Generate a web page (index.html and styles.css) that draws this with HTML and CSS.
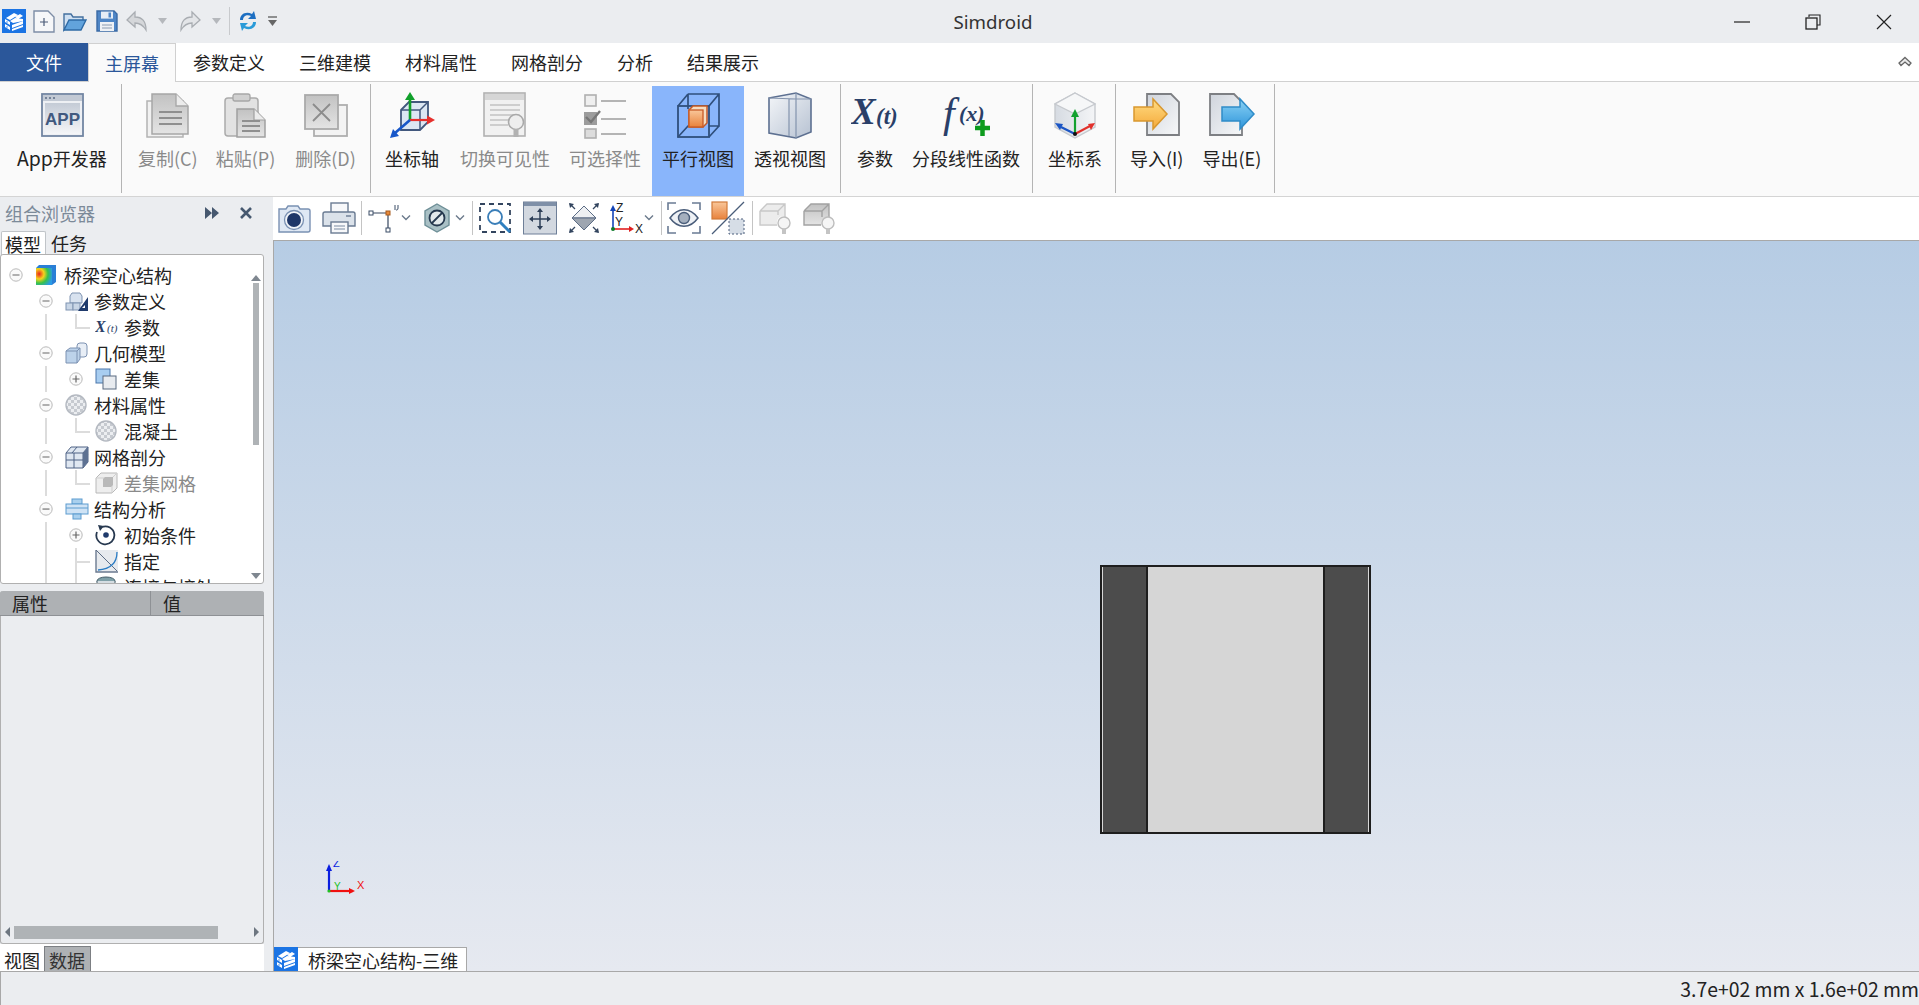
FILE: index.html
```html
<!DOCTYPE html>
<html lang="zh-CN">
<head>
<meta charset="utf-8">
<title>Simdroid</title>
<link rel="stylesheet" href="styles.css">
</head>
<body>
<svg class="defs" aria-hidden="true">
  <defs>
    <linearGradient id="gPanel" x1="0" y1="0" x2="0" y2="1"><stop offset="0" stop-color="#c4cbd6"/><stop offset="1" stop-color="#f5f6f8"/></linearGradient>
    <linearGradient id="gDoc" x1="0" y1="0" x2="1" y2="1"><stop offset="0" stop-color="#cfd4dc"/><stop offset="1" stop-color="#f7f8f9"/></linearGradient>
    <linearGradient id="gGrey" x1="0" y1="0" x2="0" y2="1"><stop offset="0" stop-color="#c2c2c2"/><stop offset="1" stop-color="#e4e4e4"/></linearGradient>
    <linearGradient id="gOrange" x1="0" y1="0" x2="0" y2="1"><stop offset="0" stop-color="#f9c79a"/><stop offset="1" stop-color="#e8823c"/></linearGradient>
    <linearGradient id="gYellow" x1="0" y1="0" x2="0" y2="1"><stop offset="0" stop-color="#ffdd84"/><stop offset="1" stop-color="#f5a93a"/></linearGradient>
    <linearGradient id="gBlue" x1="0" y1="0" x2="0" y2="1"><stop offset="0" stop-color="#8ad2f5"/><stop offset="1" stop-color="#2f95da"/></linearGradient>
    <linearGradient id="gCube" x1="0" y1="0" x2="1" y2="0"><stop offset="0" stop-color="#d6dbe2"/><stop offset="1" stop-color="#f4f5f7"/></linearGradient>
    <linearGradient id="gBox" x1="0" y1="0" x2="1" y2="1"><stop offset="0" stop-color="#f4f6f9"/><stop offset="1" stop-color="#b7c2d2"/></linearGradient>
    <radialGradient id="gHeat" cx="0.2" cy="0.35" r="1"><stop offset="0" stop-color="#e8261f"/><stop offset="0.3" stop-color="#f7d21c"/><stop offset="0.55" stop-color="#38c24a"/><stop offset="0.85" stop-color="#2a9be8"/></radialGradient>
    <pattern id="pCheck" width="6" height="6" patternUnits="userSpaceOnUse"><rect width="6" height="6" fill="#eceef1"/><rect width="3" height="3" fill="#c6cad0"/><rect x="3" y="3" width="3" height="3" fill="#c6cad0"/></pattern>
    <symbol id="logo" viewBox="0 0 24 24">
      <rect width="24" height="24" fill="#1b74e4"/>
      <path d="M4 9 12 4l4 2-8 5zM13 8l5-3 3 2-5 3zM8 12l5-3 8 1v2l-10 2z" fill="#fff"/>
      <path d="M3 10l5 3v3l-5-3zM3 15l5 3v3l-5-3zM10 16l11-4v3l-11 4zM10 20l11-4v2l-11 4z" fill="#fff"/>
      <path d="M5 12.5v1M5 17.5v1" stroke="#1b74e4" stroke-width="1.5"/>
    </symbol>
    <symbol id="sphere" viewBox="0 0 22 22">
      <circle cx="11" cy="11" r="10" fill="url(#pCheck)" stroke="#b4b9c1" stroke-width="1.4"/>
    </symbol>
    <symbol id="cubeA" viewBox="0 0 34 34">
      <path d="M2 10 9 3h18v12h-2a6 6 0 0 0-6 6v2H2z" fill="#ececec"/>
      <path d="M2 10 9 3h18v13M2 10v14h17M2 10h18v4M20 10l7-7" fill="none" stroke="#c8c8c8" stroke-width="1.400"/>
      <circle cx="26" cy="22" r="6" fill="#f5f5f5" stroke="#bdbdbd" stroke-width="1.400"/>
      <rect x="24" y="28" width="4" height="5" fill="#c4c4c4"/>
    </symbol>
    <symbol id="cubeB" viewBox="0 0 34 34">
      <path d="M2 10 9 3h18v13l-6 2v6H2z" fill="url(#gGrey)"/>
      <path d="M2 10 9 3h18v13M2 10v14h17M2 10h18v6M20 10l7-7" fill="none" stroke="#a2a2a2" stroke-width="1.400"/>
      <circle cx="26" cy="22" r="6" fill="#f5f5f5" stroke="#bdbdbd" stroke-width="1.400"/>
      <rect x="24" y="28" width="4" height="5" fill="#c4c4c4"/>
    </symbol>
    <symbol id="chev" viewBox="0 0 10 8"><path d="M1 1.500 5 5.500 9 1.500" fill="none" stroke="#6b7a8c" stroke-width="1.400"/></symbol>
    <symbol id="minus" viewBox="0 0 14 14"><circle cx="7" cy="7" r="6.200" fill="#fafafa" stroke="#b9b9b9"/><path d="M3.500 7h7" stroke="#666" stroke-width="1.200"/></symbol>
    <symbol id="plus" viewBox="0 0 14 14"><circle cx="7" cy="7" r="6.200" fill="#fafafa" stroke="#b9b9b9"/><path d="M3.500 7h7M7 3.500v7" stroke="#666" stroke-width="1.200"/></symbol>
  </defs>
</svg>

<div class="app">
  <header class="titlebar">
    <div class="quick">
      <svg class="q-logo" width="24" height="24"><use href="#logo"/></svg>
      <svg class="q-new" width="22" height="24" viewBox="0 0 22 24"><path d="M1 2h14l6 6v15H1z" fill="#f6f7f9" stroke="#7d8da6" stroke-width="1.400"/><path d="M7 13h8M11 9v8" stroke="#4a5b78" stroke-width="1.200"/></svg>
      <svg class="q-open" width="24" height="24" viewBox="0 0 24 24"><path d="M1 21V5h7l2 3h10v4H7z" fill="#cfe0f2" stroke="#44709f" stroke-width="1.400"/><path d="M1 21 6 11h17l-5 10z" fill="#62a3dc" stroke="#2f6ba5" stroke-width="1.400"/></svg>
      <svg class="q-save" width="22" height="24" viewBox="0 0 22 24"><path d="M1 2h17l3 3v17H1z" fill="#4f86c6" stroke="#3a6aa5" stroke-width="1.400"/><rect x="5" y="2.600" width="12" height="7" fill="#e6edf6"/><rect x="12.500" y="3.500" width="2.500" height="5" fill="#4f86c6"/><rect x="4" y="13" width="14" height="9" fill="#eef1f5"/><path d="M6 16h10M6 19h10" stroke="#8a9ab0"/></svg>
      <svg class="q-undo" width="22" height="22" viewBox="0 0 22 22"><path d="M9 2 1 10l8 7v-4c5 0 8 2 11 7 0-9-4-13-11-13z" fill="#d5d7da" stroke="#a9adb2" stroke-width="1.300"/></svg>
      <svg class="q-c1" width="9" height="6" viewBox="0 0 9 6"><path d="M0 0h9L4.500 6z" fill="#b5b8bc"/></svg>
      <svg class="q-redo" width="22" height="22" viewBox="0 0 22 22"><path d="M13 2l8 8-8 7v-4c-5 0-8 2-11 7 0-9 4-13 11-13z" fill="#e3e5e8" stroke="#a9adb2" stroke-width="1.300"/></svg>
      <svg class="q-c2" width="9" height="6" viewBox="0 0 9 6"><path d="M0 0h9L4.500 6z" fill="#b5b8bc"/></svg>
      <span class="q-sep"></span>
      <svg class="q-sync" width="20" height="24" viewBox="0 0 20 24"><path d="M2 11C2 5 8 2 14 5l2-3 2 8-8 0 3-3C9 5 5 7 5 11z" fill="#1d6fc2"/><path d="M18 13c0 6-6 9-12 6l-2 3-2-8 8 0-3 3c4 2 8 0 8-4z" fill="#2a9bd8"/></svg>
      <svg class="q-more" width="9" height="10" viewBox="0 0 9 10"><path d="M0 1h9" stroke="#666" stroke-width="1.400"/><path d="M0 4h9L4.500 10z" fill="#666"/></svg>
    </div>
    <div class="app-title">Simdroid</div>
    <div class="winctl">
      <span class="win-btn"><svg width="16" height="16" viewBox="0 0 16 16"><path d="M0 8h16" stroke="#222" stroke-width="1.200"/></svg></span>
      <span class="win-btn"><svg width="16" height="16" viewBox="0 0 16 16"><path d="M4 3V1h11v10h-3" fill="none" stroke="#222" stroke-width="1.100"/><rect x="1" y="4" width="11" height="11" fill="none" stroke="#222" stroke-width="1.300"/></svg></span>
      <span class="win-btn"><svg width="16" height="16" viewBox="0 0 16 16"><path d="M1 1l14 14M15 1 1 15" stroke="#222" stroke-width="1.200"/></svg></span>
    </div>
  </header>

  <nav class="tabs">
    <span class="tab tab-file">文件</span>
    <span class="tab tab-active">主屏幕</span>
    <span class="tab">参数定义</span>
    <span class="tab">三维建模</span>
    <span class="tab">材料属性</span>
    <span class="tab">网格剖分</span>
    <span class="tab">分析</span>
    <span class="tab">结果展示</span>
    <svg class="collapse" width="14" height="11" viewBox="0 0 14 11"><path d="M7 1.500 13 7l-2 2.500-4-3.500-4 3.500L1 7z" fill="#e9e9e9" stroke="#666" stroke-width="1.300"/></svg>
  </nav>

  <section class="ribbon">
    <div class="group g1">
      <div class="rb">
        <svg width="44" height="46" viewBox="0 0 44 46"><rect x="2" y="2" width="41" height="42" fill="#eef0f4" stroke="#7285a2" stroke-width="1.800"/><rect x="3" y="3" width="39" height="6" fill="#c2c9d4"/><path d="M5 6h2M9 6h2M13 6h2" stroke="#5c6c85" stroke-width="1.400"/><rect x="5" y="11" width="35" height="31" fill="url(#gPanel)"/><text class="svg-app" x="22.500" y="33" text-anchor="middle">APP</text></svg>
        <span><span class="lat">App</span>开发器</span>
      </div>
    </div>
    <div class="group g2">
      <div class="rb off">
        <svg width="46" height="46" viewBox="0 0 46 46"><rect x="2" y="9" width="36" height="36" fill="#f1f1f1" stroke="#b3b3b3" stroke-width="1.500"/><path d="M7 2h24l12 12v28H7z" fill="url(#gGrey)" stroke="#a6a6a6" stroke-width="1.500"/><path d="M31 2v12h12" fill="#ececec" stroke="#a6a6a6" stroke-width="1.300"/><path d="M14 20h23M14 26h23M14 32h23" stroke="#8f8f8f" stroke-width="2"/></svg>
        <span>复制(C)</span>
      </div>
      <div class="rb off s-2">
        <svg width="46" height="46" viewBox="0 0 46 46"><rect x="3" y="6" width="33" height="38" rx="3" fill="#e2e2e2" stroke="#ababab" stroke-width="1.500"/><rect x="11" y="2" width="17" height="7" rx="2" fill="#d0d0d0" stroke="#a6a6a6" stroke-width="1.300"/><path d="M15 17h17l11 11v17H15z" fill="url(#gGrey)" stroke="#a0a0a0" stroke-width="1.500"/><path d="M32 17v11h11" fill="#ececec" stroke="#a0a0a0" stroke-width="1.200"/><path d="M20 29h18M20 34h18M20 39h18" stroke="#8f8f8f" stroke-width="1.800"/></svg>
        <span>粘贴(P)</span>
      </div>
      <div class="rb off">
        <svg width="46" height="46" viewBox="0 0 46 46"><rect x="11" y="13" width="33" height="31" fill="#f3f3f3" stroke="#aeaeae" stroke-width="1.800"/><rect x="2" y="3" width="33" height="34" fill="url(#gGrey)" stroke="#aaaaaa" stroke-width="1.800"/><path d="M10 12l17 17M27 12 10 29" stroke="#8c8c8c" stroke-width="1.800"/></svg>
        <span>删除(D)</span>
      </div>
    </div>
    <div class="group g3">
      <div class="rb">
        <svg width="46" height="48" viewBox="0 0 46 48"><path d="M12 19l8-8h19v20l-8 8H12z" fill="#dce7f3" stroke="#42587d" stroke-width="1.800"/><path d="M12 19h19v20M31 19l8-8" fill="none" stroke="#42587d" stroke-width="1.500"/><path d="M21 29V8" stroke="#10a02a" stroke-width="2.600"/><path d="M21 1l5 8H16z" fill="#10a02a"/><path d="M21 29h18" stroke="#e6302c" stroke-width="2.200"/><path d="M46 29l-8 4.500v-9z" fill="#e6302c"/><path d="M21 29 6 42" stroke="#1757c9" stroke-width="2.600"/><path d="M1 47l3-9 6 7z" fill="#1757c9"/></svg>
        <span>坐标轴</span>
      </div>
      <div class="rb off s1">
        <svg width="46" height="48" viewBox="0 0 46 48"><rect x="2" y="2" width="41" height="43" fill="#f1f1f1" stroke="#b1b1b1" stroke-width="1.600"/><rect x="3" y="3" width="39" height="6" fill="#d6d6d6"/><path d="M8 14h30M8 19h30M8 24h24M8 29h20M8 34h18" stroke="#c2c2c2" stroke-width="1.600"/><circle cx="34" cy="31" r="7.500" fill="#eeeeee" stroke="#a9a9a9" stroke-width="1.600"/><rect x="31.500" y="38" width="5" height="8" fill="#b2b2b2"/></svg>
        <span>切换可见性</span>
      </div>
      <div class="rb off s-1">
        <svg width="46" height="48" viewBox="0 0 46 48"><rect x="3" y="4" width="11" height="11" fill="#efefef" stroke="#b0b0b0" stroke-width="1.600"/><rect x="3" y="38" width="11" height="9" fill="#dcdcdc" stroke="#b0b0b0" stroke-width="1.600"/><path d="M2 21h13v13H2z" fill="#9c9c9c"/><path d="M4 26l5 5 9-11" fill="none" stroke="#777" stroke-width="2.400"/><path d="M19 10h25M19 28h25M19 43h25" stroke="#b4b4b4" stroke-width="2"/></svg>
        <span>可选择性</span>
      </div>
      <div class="rb hi s1">
        <svg width="48" height="48" viewBox="0 0 48 48"><path d="M14 3h31v32H35M14 3 4 15M45 3 35 15M4 46l10-11h2M45 35 35 46M14 3v15" fill="none" stroke="#2f4f7c" stroke-width="1.700"/><rect x="4" y="15" width="31" height="31" fill="none" stroke="#2f4f7c" stroke-width="1.800"/><path d="M15 19l4-4h14v17l-4 4H15z" fill="#f5dcc0" stroke="#c65a25" stroke-width="1.500"/><rect x="15" y="19" width="14" height="17" fill="url(#gOrange)" stroke="#c65a25" stroke-width="1.300"/></svg>
        <span>平行视图</span>
      </div>
      <div class="rb">
        <svg width="46" height="48" viewBox="0 0 46 48"><path d="M2 7 29 2l15 6v33l-15 6-27-5z" fill="url(#gBox)" stroke="#5d7091" stroke-width="1.600"/><path d="M2 7l27 1 15 0M22 8v37M29 2v45" fill="none" stroke="#8393ad" stroke-width="1.200"/></svg>
        <span>透视视图</span>
      </div>
    </div>
    <div class="group g4">
      <div class="rb">
        <svg width="48" height="46" viewBox="0 0 48 46"><text class="svg-x" x="0" y="32">X</text><text class="svg-t" x="25" y="32">(t)</text></svg>
        <span>参数</span>
      </div>
      <div class="rb s-7">
        <svg width="50" height="48" viewBox="0 0 50 48"><text class="svg-f" x="2" y="36">f</text><text class="svg-fx" x="18" y="30">(x)</text><path d="M34 37h15M41.500 29v16" stroke="#0d9b1d" stroke-width="4.500"/></svg>
        <span>分段线性函数</span>
      </div>
    </div>
    <div class="group g5">
      <div class="rb">
        <svg width="42" height="48" viewBox="0 0 42 48"><path d="M21 2l20 11v23L21 47 1 36V13z" fill="url(#gCube)" stroke="#c6c9ce" stroke-width="1.400"/><path d="M21 2l20 11-20 10L1 13z" fill="#f6f7f8" stroke="#c6c9ce" stroke-width="1.300"/><path d="M21 43V24" stroke="#12a12e" stroke-width="2.200"/><path d="M21 18l4 8h-8z" fill="#12a12e"/><path d="M21 43l15-8" stroke="#e1312c" stroke-width="2.200"/><path d="M41 32l-4 7-3-6z" fill="#e1312c"/><path d="M21 43 7 36" stroke="#1b55c4" stroke-width="2.200"/><path d="M1 32l8 1-3 6z" fill="#1b55c4"/><circle cx="21" cy="43" r="2" fill="#111"/></svg>
        <span>坐标系</span>
      </div>
    </div>
    <div class="group g6">
      <div class="rb">
        <svg width="48" height="46" viewBox="0 0 48 46"><path d="M14 2h24l8 8v33H14z" fill="url(#gDoc)" stroke="#7d7f83" stroke-width="1.800"/><path d="M1 15h19V7l14 15-14 15v-8H1z" fill="url(#gYellow)" stroke="#d9982f" stroke-width="1.500"/></svg>
        <span>导入(I)</span>
      </div>
      <div class="rb s-1">
        <svg width="48" height="46" viewBox="0 0 48 46"><path d="M2 2h24l8 8v33H2z" fill="url(#gDoc)" stroke="#7d7f83" stroke-width="1.800"/><path d="M14 15h18V7l14 15-14 15v-8H14z" fill="url(#gBlue)" stroke="#2f8cc8" stroke-width="1.500"/></svg>
        <span>导出(E)</span>
      </div>
    </div>
  </section>

  <main class="main">
    <aside class="side">
      <div class="side-head">
        <span class="side-title">组合浏览器</span>
        <svg class="side-ff" width="16" height="14" viewBox="0 0 16 14"><path d="M1 1l7 6-7 6zM8 1l7 6-7 6z" fill="#46586f"/></svg>
        <svg class="side-x" width="14" height="14" viewBox="0 0 14 14"><path d="M2 2l10 10M12 2 2 12" stroke="#46586f" stroke-width="2.600"/></svg>
      </div>
      <div class="side-tabs">
        <span class="stab stab-on">模型</span>
        <span class="stab">任务</span>
      </div>
      <div class="tree-box">
        <div class="tree">
          <div class="row"><span class="cell"><svg class="tg" width="14" height="14"><use href="#minus"/></svg></span>
            <span class="ti"><svg width="22" height="22" viewBox="0 0 22 22"><path d="M4 1h17v17l-4 3H1V4z" fill="#2a7fd6"/><rect x="1" y="4" width="16" height="17" fill="url(#gHeat)"/></svg></span>桥梁空心结构</div>
          <div class="row"><span class="cell"></span><span class="cell"><svg class="tg" width="14" height="14"><use href="#minus"/></svg></span>
            <span class="ti"><svg width="24" height="22" viewBox="0 0 24 22"><path d="M7 3h8l2 3v7H5V6z" fill="#d8e2ef" stroke="#7f93b1"/><rect x="1" y="13" width="7" height="7" fill="#c9d6e6" stroke="#7f93b1"/><rect x="8" y="13" width="7" height="7" fill="#c9d6e6" stroke="#7f93b1"/><path d="M23 7v14H13z" fill="#1f3a6b"/><path d="M20 15v3h-3z" fill="#fff"/></svg></span>参数定义</div>
          <div class="row"><span class="cell"></span><span class="cell v"></span><span class="cell l"></span>
            <span class="ti"><svg width="26" height="20" viewBox="0 0 26 20"><text class="svg-x-s" x="0" y="15">X</text><text class="svg-t-s" x="12" y="15">(t)</text></svg></span>参数</div>
          <div class="row"><span class="cell"></span><span class="cell"><svg class="tg" width="14" height="14"><use href="#minus"/></svg></span>
            <span class="ti"><svg width="24" height="24" viewBox="0 0 24 24"><rect x="12" y="2" width="10" height="14" rx="3" fill="#e8eef6" stroke="#7d92b2"/><path d="M1 10l4-3h10v11l-3 4H1z" fill="#bcd2ea" stroke="#7d92b2"/><path d="M1 10h11v12M12 10l3-3" fill="none" stroke="#7d92b2"/></svg></span>几何模型</div>
          <div class="row"><span class="cell"></span><span class="cell v"></span><span class="cell"><svg class="tg" width="14" height="14"><use href="#plus"/></svg></span>
            <span class="ti"><svg width="22" height="22" viewBox="0 0 22 22"><rect x="1" y="1" width="14" height="14" fill="#a8cdf0" stroke="#4a76ab"/><rect x="8" y="8" width="13" height="13" fill="#e8ebef" stroke="#5a6a80"/></svg></span>差集</div>
          <div class="row"><span class="cell"></span><span class="cell"><svg class="tg" width="14" height="14"><use href="#minus"/></svg></span>
            <span class="ti"><svg width="22" height="22"><use href="#sphere"/></svg></span>材料属性</div>
          <div class="row"><span class="cell"></span><span class="cell v"></span><span class="cell l"></span>
            <span class="ti"><svg width="22" height="22"><use href="#sphere"/></svg></span>混凝土</div>
          <div class="row"><span class="cell"></span><span class="cell"><svg class="tg" width="14" height="14"><use href="#minus"/></svg></span>
            <span class="ti"><svg width="24" height="24" viewBox="0 0 24 24"><path d="M1 8l5-6h17v15l-5 6H1z" fill="#dfe7f1" stroke="#4f6385"/><path d="M1 8h17v15M18 8l5-6M1 15h17M9 8v15M7 8l5-6M18 15l5-6" fill="none" stroke="#4f6385"/><path d="M18 8l5-6v15l-5 6z" fill="#5d7192"/></svg></span>网格剖分</div>
          <div class="row muted"><span class="cell"></span><span class="cell v"></span><span class="cell l"></span>
            <span class="ti"><svg width="24" height="24" viewBox="0 0 24 24"><path d="M1 7l5-5h16v15l-5 5H1z" fill="#eeeeee" stroke="#b8b8b8"/><path d="M1 7h16v15M17 7l5-5" fill="none" stroke="#cfcfcf"/><path d="M8 8l2-2h8v8l-2 2H8z" fill="#b9b9b9"/></svg></span>差集网格</div>
          <div class="row"><span class="cell"></span><span class="cell"><svg class="tg" width="14" height="14"><use href="#minus"/></svg></span>
            <span class="ti"><svg width="24" height="22" viewBox="0 0 24 22"><rect x="7" y="1" width="10" height="5" fill="#a9d0ee" stroke="#5c9ccf"/><rect x="1" y="6" width="22" height="10" fill="#cfe3f5" stroke="#5c9ccf"/><path d="M1 10h22" stroke="#5c9ccf"/><rect x="8" y="16" width="8" height="5" fill="#a9d0ee" stroke="#5c9ccf"/></svg></span>结构分析</div>
          <div class="row"><span class="cell"></span><span class="cell v"></span><span class="cell"><svg class="tg" width="14" height="14"><use href="#plus"/></svg></span>
            <span class="ti"><svg width="22" height="22" viewBox="0 0 22 22"><path d="M7 3a9 9 0 1 1-5 5" fill="none" stroke="#27384f" stroke-width="1.800"/><path d="M3 1l6 1-4 5z" fill="#27384f"/><circle cx="11" cy="11" r="2.800" fill="#1f3a6b"/></svg></span>初始条件</div>
          <div class="row"><span class="cell"></span><span class="cell v"></span><span class="cell t"></span>
            <span class="ti"><svg width="24" height="24" viewBox="0 0 24 24"><rect x="1" y="1" width="22" height="22" fill="#e7eaee"/><path d="M1 1v22h22" fill="none" stroke="#6b7a90" stroke-width="1.400"/><path d="M1 1l21 21" stroke="#5d6d85"/><path d="M22 3c0 10-6 17-19 18" fill="none" stroke="#2a7cc4" stroke-width="1.300"/></svg></span>指定</div>
          <div class="row"><span class="cell"></span><span class="cell v"></span><span class="cell t"></span>
            <span class="ti"><svg width="22" height="22" viewBox="0 0 22 22"><ellipse cx="11" cy="5" rx="9" ry="4" fill="#7fa0a8" stroke="#465f6b"/><path d="M2 5v12c0 5 18 5 18 0V5" fill="#d5dde2" stroke="#465f6b"/></svg></span>连接与接触</div>
        </div>
        <div class="vscroll">
          <svg width="10" height="6" viewBox="0 0 10 6"><path d="M5 0l5 6H0z" fill="#7f8790"/></svg>
          <span class="vthumb"></span>
          <svg class="vdown" width="10" height="6" viewBox="0 0 10 6"><path d="M0 0h10L5 6z" fill="#7f8790"/></svg>
        </div>
      </div>
      <div class="props">
        <div class="props-head"><span class="p-name">属性</span><span class="p-val">值</span></div>
        <div class="props-body"></div>
        <div class="hscroll">
          <svg width="5" height="10" viewBox="0 0 5 10"><path d="M5 0v10L0 5z" fill="#6d7680"/></svg>
          <span class="hthumb"></span>
          <svg class="hright" width="5" height="10" viewBox="0 0 5 10"><path d="M0 0v10l5-5z" fill="#6d7680"/></svg>
        </div>
      </div>
      <div class="side-foot">
        <span class="ftab">视图</span>
        <span class="ftab ftab-on">数据</span>
      </div>
    </aside>

    <div class="work">
      <div class="toolbar">
        <svg class="ml4" width="34" height="34" viewBox="0 0 34 34"><path d="M2 8h7l2-3h10l2 3h8a2 2 0 0 1 2 2v19a2 2 0 0 1-2 2H2z" fill="#dfe8f4" stroke="#7a91b3" stroke-width="1.400"/><circle cx="17" cy="19" r="9.500" fill="#f2f5f9" stroke="#7a91b3" stroke-width="1.300"/><circle cx="17" cy="19" r="7" fill="#1f3768"/></svg>
        <svg class="ml11" width="34" height="34" viewBox="0 0 34 34"><rect x="9" y="2" width="17" height="10" fill="#f7f8fa" stroke="#6a7b92" stroke-width="1.400"/><path d="M3 11h28a2 2 0 0 1 2 2v12H1V13a2 2 0 0 1 2-2z" fill="#dbe2ea" stroke="#6a7b92" stroke-width="1.400"/><rect x="9" y="21" width="17" height="11" fill="#f7f8fa" stroke="#6a7b92" stroke-width="1.400"/><path d="M12 25h11M12 28h11" stroke="#7a8ba2"/><path d="M24 15h5" stroke="#6a7b92" stroke-width="1.400"/></svg>
        <span class="tb-sep"></span>
        <svg class="ml5" width="34" height="34" viewBox="0 0 34 34"><path d="M5 12h16v17" fill="none" stroke="#36475f" stroke-width="1.200"/><rect x="2" y="10" width="4" height="4" fill="#fff" stroke="#3a4c66"/><rect x="19" y="10" width="4" height="4" fill="#e98a3a" stroke="#a65a1c"/><rect x="19" y="27" width="4" height="4" fill="#fff" stroke="#3a4c66"/><path d="M28 4v5M31 4v3c0 2-1 2-2 2" fill="none" stroke="#3a4c66"/></svg>
        <svg width="10" height="8"><use href="#chev"/></svg>
        <svg class="ml9" width="34" height="34" viewBox="0 0 34 34"><path d="M17 3l12 7v14l-12 7-12-7V10z" fill="#a9c0c5" stroke="#6e8f97" stroke-width="1.400"/><circle cx="17" cy="17" r="7.500" fill="#e3eaec" stroke="#26394f" stroke-width="1.800"/><path d="M12 22l10-10" stroke="#26394f" stroke-width="1.800"/></svg>
        <svg class="ml1" width="10" height="8"><use href="#chev"/></svg>
        <span class="tb-sep ml7"></span>
        <svg class="ml5" width="34" height="34" viewBox="0 0 34 34"><rect x="2" y="3" width="30" height="28" fill="none" stroke="#33455f" stroke-width="1.800" stroke-dasharray="5 4"/><circle cx="17" cy="16" r="7" fill="#fff" stroke="#3a7eb8" stroke-width="1.800"/><path d="M22 21l10 10" stroke="#2f7fbf" stroke-width="3"/></svg>
        <svg class="ml11" width="34" height="34" viewBox="0 0 34 34"><rect x="0.500" y="1" width="33" height="32" fill="#d2d8e0" stroke="#6e7f98"/><rect x="1" y="1" width="32" height="4" fill="#7f90a8"/><path d="M17 9v18M8 18h18" stroke="#2e3f58" stroke-width="1.500"/><path d="M17 7l3 4h-6zM17 29l3-4h-6zM6 18l4-3v6zM28 18l-4-3v6z" fill="#2e3f58"/></svg>
        <svg class="ml10" width="34" height="34" viewBox="0 0 34 34"><path d="M17 5l12 12H5z" fill="#eef0f3" stroke="#5c6d86"/><path d="M5 17h24L17 29z" fill="#9ea6b1" stroke="#5c6d86"/><path d="M2 2l5 1-4 4zM32 2l-5 1 4 4zM2 32l5-1-4-4zM32 32l-5-1 4-4z" fill="#33455f"/><path d="M3 3l5 5M31 3l-5 5M3 31l5-5M31 31l-5-5" stroke="#33455f" stroke-width="1.300"/></svg>
        <svg class="ml9" width="34" height="34" viewBox="0 0 34 34"><path d="M3 27V8" stroke="#1444b8" stroke-width="1.600"/><path d="M3 4l3 6H0z" fill="#1444b8"/><path d="M3 28h18" stroke="#e02020" stroke-width="1.600"/><path d="M24 28l-5 3v-6z" fill="#e02020"/><circle cx="3" cy="28" r="2" fill="#0d7a2a"/><text class="svg-ax" x="6" y="11">Z</text><text class="svg-ax" x="5" y="25">Y</text><text class="svg-ax" x="25" y="32">X</text></svg>
        <svg class="chev-end" width="10" height="8"><use href="#chev"/></svg>
        <span class="tb-sep ml7"></span>
        <svg class="ml5" width="34" height="34" viewBox="0 0 34 34"><path d="M1 9V2h8M25 2h8v7M1 25v7h8M25 32h8v-7" fill="none" stroke="#6a7b94" stroke-width="1.600"/><path d="M3 17c8-11 20-11 28 0-8 11-20 11-28 0z" fill="#eef1f5" stroke="#4a5d7a" stroke-width="1.500"/><circle cx="17" cy="17" r="5.500" fill="#a4afbe" stroke="#4a5d7a" stroke-width="1.400"/></svg>
        <svg class="ml10" width="34" height="34" viewBox="0 0 34 34"><rect x="1" y="1" width="15" height="17" fill="url(#gOrange)" stroke="#d07a3a" stroke-width="1.200"/><path d="M1 33 33 1" stroke="#4a5d7a" stroke-width="1.300"/><rect x="18" y="18" width="15" height="15" fill="#d6dde6" stroke="#4a5d7a" stroke-dasharray="2 2"/></svg>
        <span class="tb-sep ml7"></span>
        <svg class="ml5" width="34" height="34"><use href="#cubeA"/></svg>
        <svg class="ml10" width="34" height="34"><use href="#cubeB"/></svg>
      </div>
      <div class="view">
        <div class="canvas">
          <div class="model"><span class="m-dark"></span><span class="m-light"></span><span class="m-dark"></span></div>
          <svg class="triad" width="50" height="42" viewBox="0 0 50 42">
            <path d="M8 30V8" stroke="#0a1ee0" stroke-width="2.200"/><path d="M8 3l3 7H5z" fill="#0a1ee0"/>
            <path d="M8 30h24" stroke="#f01010" stroke-width="2.200"/><path d="M28 27l6 3-6 3z" fill="#f01010"/>
            <circle cx="8" cy="30" r="1.600" fill="#20c020"/>
            <text class="t-z" x="12" y="6">Z</text><text class="t-x" x="36" y="28">X</text><text class="t-y" x="13" y="29">Y</text>
          </svg>
        </div>
        <div class="doc-tabs">
          <svg width="24" height="24"><use href="#logo"/></svg>
          <span class="doc-tab">桥梁空心结构-三维</span>
        </div>
      </div>
    </div>
  </main>

  <footer class="status">3.7e+02 mm x 1.6e+02 mm</footer>
</div>
</body>
</html>
```

FILE: styles.css
```css
* { box-sizing: border-box; }
html, body { margin: 0; height: 100%; overflow: hidden; }
body {
  font-family: "Noto Sans CJK SC", "Noto Sans", sans-serif;
  font-size: 18px;
  line-height: 1;
  color: #222;
  background: #ebedf0;
}
svg { display: block; flex: none; }
.defs { width: 0; height: 0; }
.app { display: flex; flex-direction: column; width: 1919px; height: 1005px; }

/* title bar */
.titlebar { display: flex; align-items: center; height: 43px; flex: none; background: #ebedf0; }
.quick { display: flex; align-items: center; width: 280px; height: 41px; margin-bottom: 2px; padding-left: 2px; }
.q-new { margin-left: 7px; }
.q-open { margin-left: 8px; }
.q-save { margin-left: 9px; }
.q-undo { margin-left: 8px; }
.q-c1 { margin-left: 10px; }
.q-redo { margin-left: 12px; }
.q-c2 { margin-left: 11px; }
.q-sep { width: 1px; height: 28px; background: #c8cacd; margin-left: 8px; }
.q-sync { margin-left: 8px; }
.q-more { margin-left: 10px; }
.app-title { flex: 1; padding-top: 1px; text-align: center; font-size: 18.7px; color: #333; font-family: "Noto Sans", sans-serif; }
.winctl { display: flex; width: 213px; }
.win-btn { display: flex; align-items: center; justify-content: center; width: 71px; height: 43px; }

/* tabs */
.tabs { display: flex; align-items: stretch; height: 39px; flex: none; background: #fff; border-bottom: 1px solid #d0d0d0; }
.tab { display: flex; align-items: center; padding: 0 17px; height: 38px; }
.tab-file { width: 88px; justify-content: center; padding: 0; background: #2b579a; color: #fff; }
.tab-active { color: #2b579a; height: 39px; border: 1px solid #d0d0d0; border-bottom: 0; background: #fafafa; padding: 0 16px; }
.collapse { margin: 13px 7px 0 auto; }

/* ribbon */
.ribbon { display: flex; height: 115px; flex: none; background: #fafafa; border-bottom: 1px solid #d4d4d4; padding-top: 2px; }
.group { display: flex; height: 109px; border-right: 1px solid #b4b4b4; }
.g1 { width: 122px; padding-left: 7px; }
.g2 { width: 249px; padding-left: 6px; }
.g3 { width: 470px; padding-left: 4px; }
.g4 { width: 192px; padding-left: 0; }
.g5 { width: 83px; padding-left: 5px; }
.g6 { width: 159px; padding-left: 4px; }
.rb { display: flex; flex-direction: column; align-items: center; height: 110px; margin-top: 2px; padding: 5px 10px 0; white-space: nowrap; }
.rb svg { height: 48px; }
.rb > span { margin-top: 6px; line-height: 26px; }
.lat { font-size: 19.4px; }
.s1 { margin-left: 1px; }
.s-1 { margin-left: -1px; }
.s-2 { margin-left: -2px; }
.s-7 { margin-left: -7px; }
.off span { color: #8a8a8a; }
.hi { background: #89b5fb; }
.svg-app { font: bold 17px "Liberation Sans", sans-serif; fill: #41597f; }
.svg-x { font: italic bold 37px "Liberation Serif", serif; fill: #2a3f68; }
.svg-t { font: italic bold 23px "Liberation Serif", serif; fill: #2a3f68; }
.svg-f { font: italic 42px "Liberation Serif", serif; fill: #2a3f68; }
.svg-fx { font: italic bold 22px "Liberation Serif", serif; fill: #2a3f68; }
.svg-x-s { font: italic bold 16px "Liberation Serif", serif; fill: #2a3f68; }
.svg-t-s { font: italic 11px "Liberation Serif", serif; fill: #2a3f68; }
.svg-ax { font: 12px "Liberation Sans", sans-serif; fill: #222; }

/* main */
.main { display: flex; flex: 1; min-height: 0; }
.side { display: flex; flex-direction: column; width: 273px; flex: none; background: #ebedf0; }
.side-head { display: flex; align-items: center; height: 34px; flex: none; padding: 0 0 2px 5px; }
.side-title { color: #7c8a99; width: 199px; }
.side-x { margin-left: 19px; }
.side-tabs { display: flex; height: 24px; flex: none; padding-left: 1px; }
.stab { display: flex; align-items: center; padding: 0 4px 0 5px; height: 24px; }
.stab-on { width: 45px; background: #fff; border: 1px solid #c0c4c8; border-bottom: 0; border-radius: 2px 2px 0 0; padding: 0 0 0 3px; }
.tree-box { display: flex; height: 330px; flex: none; width: 264px; background: #fff; border: 1px solid #b0b0b0; border-radius: 3px; margin-top: -1px; overflow: hidden; }
.tree { flex: 1; padding-top: 7px; height: 328px; overflow: hidden; }
.row { display: flex; align-items: center; height: 26px; white-space: nowrap; }
.cell { display: flex; align-items: center; justify-content: center; width: 30px; height: 26px; flex: none; }
.row > .cell:first-child { width: 29px; }
.tg { margin-left: 1px; }
.v { background: linear-gradient(#dcdcdc, #dcdcdc) 15px 0 / 2px 100% no-repeat; }
.l {
  background:
    linear-gradient(#dcdcdc, #dcdcdc) 15px 0 / 2px 14px no-repeat,
    linear-gradient(#dcdcdc, #dcdcdc) 15px 13px / 15px 2px no-repeat;
}
.t {
  background:
    linear-gradient(#dcdcdc, #dcdcdc) 15px 0 / 2px 100% no-repeat,
    linear-gradient(#dcdcdc, #dcdcdc) 15px 13px / 15px 2px no-repeat;
}
.ti { display: flex; align-items: center; width: 34px; height: 26px; padding-left: 5px; flex: none; }
.muted { color: #8a8a8a; }
.vscroll { display: flex; flex-direction: column; align-items: center; width: 12px; flex: none; padding-top: 20px; margin-right: 1px; height: 328px; }
.vthumb { width: 6px; height: 162px; background: #afb3b6; margin-top: 2px; }
.vdown { margin-top: auto; margin-bottom: 4px; }
.props { display: flex; flex-direction: column; height: 353px; flex: none; width: 264px; margin-top: 7px; border: 1px solid #b0b0b0; border-top: 0; border-radius: 3px; }
.props-head { display: flex; align-items: center; height: 25px; flex: none; margin: 0 -1px; background: #aeb1b4; border-bottom: 1px solid #8e9195; border-radius: 3px 3px 0 0; }
.p-name { width: 151px; padding-left: 12px; line-height: 24px; border-right: 1px solid #8e9195; }
.p-val { padding-left: 12px; }
.props-body { flex: 1; }
.hscroll { display: flex; align-items: center; height: 18px; flex: none; padding: 0 4px; margin-bottom: 2px; }
.hthumb { width: 204px; height: 13px; background: #afb3b6; margin-left: 4px; }
.hright { margin-left: auto; }
.side-foot { display: flex; align-items: flex-end; height: 27px; flex: 1; width: 264px; padding-left: 3px; background: #fff; gap: 3px; }
.ftab { display: flex; align-items: center; height: 25px; padding: 2px 1px 0; }
.ftab-on { width: 47px; background: #aeb1b4; border: 1px solid #7c7f83; border-bottom: 0; color: #333; padding-left: 4px; }

.work { display: flex; flex-direction: column; flex: 1; min-width: 0; }
.toolbar { display: flex; align-items: center; height: 43px; flex: none; background: #fff; padding-bottom: 2px; }
.tb-sep { width: 1px; height: 34px; background: #c4c4c4; margin-left: 5px; flex: none; }
.ml1 { margin-left: 1px; } .ml4 { margin-left: 4px; } .ml5 { margin-left: 5px; }
.ml7 { margin-left: 7px; } .ml9 { margin-left: 9px; } .ml10 { margin-left: 10px; } .ml11 { margin-left: 11px; }
.chev-end { margin-left: 0; }
.view { display: flex; flex-direction: column; flex: 1; min-height: 0; border-top: 1px solid #a8a8a8; border-left: 1px solid #a8a8a8; background: linear-gradient(#b6cce4, #e6e9f0); }
.canvas { position: relative; flex: 1; }
.model { position: absolute; left: 826px; top: 324px; display: flex; width: 271px; height: 269px; border: 2px solid #1e1e1e; background: #d6d6d6; }
.m-dark { width: 44px; background: #4c4c4c; border-left: 1px solid #d8d8d8; }
.m-dark:last-child { border-left: 0; border-right: 1px solid #d8d8d8; }
.m-light { flex: 1; border-left: 2px solid #1e1e1e; border-right: 2px solid #1e1e1e; background: #d6d6d6; }
.triad { position: absolute; left: 47px; top: 620px; }
.t-z { font: 11px "Liberation Sans", sans-serif; fill: #0a1ee0; }
.t-x { font: 11px "Liberation Sans", sans-serif; fill: #f01010; }
.t-y { font: 10px "Liberation Sans", sans-serif; fill: #20c020; }
.doc-tabs { display: flex; height: 24px; flex: none; }
.doc-tab { display: flex; align-items: center; width: 169px; padding-left: 10px; background: #fff; border: 1px solid #a8a8a8; border-left: 0; border-bottom: 0; white-space: nowrap; }

.status { display: flex; align-items: center; justify-content: flex-end; height: 34px; flex: none; font-size: 19.4px; background: #ebedf0; border-top: 1px solid #a8a8a8; border-left: 1px solid #a8a8a8; }
```
